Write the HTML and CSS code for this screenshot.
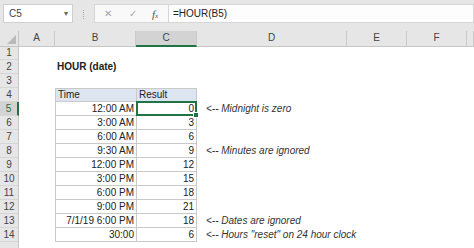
FILE: index.html
```html
<!DOCTYPE html>
<html lang="en">
<head>
    <meta charset="UTF-8">
    <title>HOUR (date)</title>
    <link rel="stylesheet" href="styles.css">
</head>
<body>
    <div class="toolbar">
        <div class="namebox">C5<span class="drop">&#9662;</span></div>
        <div class="dots"></div>
        <div class="buttons">
            <span class="btn-x">&#x2715;</span>
            <span class="btn-ok">&#x2713;</span>
            <span class="btn-fx">f<small>x</small></span>
        </div>
        <div class="formula">=HOUR(B5)</div>
    </div>

    <div class="sheet">
        <div class="row head">
            <div class="corner"><span class="tri"></span></div>
            <div class="ch">A</div>
            <div class="ch">B</div>
            <div class="ch sel">C</div>
            <div class="ch">D</div>
            <div class="ch">E</div>
            <div class="ch">F</div>
            <div class="ch"></div>
        </div>
        <div class="row"><div class="rh">1</div></div>
        <div class="row"><div class="rh">2</div><div></div><div class="title">HOUR (date)</div></div>
        <div class="row"><div class="rh">3</div></div>
        <div class="row">
            <div class="rh">4</div><div></div>
            <div class="t tb th">Time</div><div class="t tc th">Result</div>
        </div>
        <div class="row">
            <div class="rh rsel">5</div><div></div>
            <div class="t tb num">12:00 AM</div><div class="t tc num active">0</div>
            <div class="note">&lt;-- Midnight is zero</div>
        </div>
        <div class="row">
            <div class="rh">6</div><div></div>
            <div class="t tb num">3:00 AM</div><div class="t tc num">3</div>
        </div>
        <div class="row">
            <div class="rh">7</div><div></div>
            <div class="t tb num">6:00 AM</div><div class="t tc num">6</div>
        </div>
        <div class="row">
            <div class="rh">8</div><div></div>
            <div class="t tb num">9:30 AM</div><div class="t tc num">9</div>
            <div class="note">&lt;-- Minutes are ignored</div>
        </div>
        <div class="row">
            <div class="rh">9</div><div></div>
            <div class="t tb num">12:00 PM</div><div class="t tc num">12</div>
        </div>
        <div class="row">
            <div class="rh">10</div><div></div>
            <div class="t tb num">3:00 PM</div><div class="t tc num">15</div>
        </div>
        <div class="row">
            <div class="rh">11</div><div></div>
            <div class="t tb num">6:00 PM</div><div class="t tc num">18</div>
        </div>
        <div class="row">
            <div class="rh">12</div><div></div>
            <div class="t tb num">9:00 PM</div><div class="t tc num">21</div>
        </div>
        <div class="row">
            <div class="rh">13</div><div></div>
            <div class="t tb num">7/1/19 6:00 PM</div><div class="t tc num">18</div>
            <div class="note">&lt;-- Dates are ignored</div>
        </div>
        <div class="row">
            <div class="rh">14</div><div></div>
            <div class="t tb num">30:00</div><div class="t tc num">6</div>
            <div class="note">&lt;-- Hours "reset" on 24 hour clock</div>
        </div>
        <div class="row"><div class="rh"></div></div>
    </div>
</body>
</html>
```

FILE: styles.css
```css
body {
    margin: 0;
    width: 474px;
    height: 248px;
    overflow: hidden;
    background: #fff;
    font-family: "Liberation Sans", Arial, sans-serif;
    font-size: 10px;
    color: #222;
}

.toolbar {
    display: flex;
    align-items: flex-start;
    height: 31px;
    padding: 4px 0 0 3px;
    box-sizing: border-box;
    background: #e6e6e6;
}
.namebox {
    position: relative;
    width: 70px;
    height: 19px;
    box-sizing: border-box;
    border: 1px solid #cfcfcf;
    background: #fff;
    padding-left: 5px;
    line-height: 17px;
    color: #444;
}
.drop {
    position: absolute;
    right: 4px;
    top: 0;
    font-size: 8px;
    color: #666;
}
.dots {
    width: 1px;
    height: 9px;
    margin: 6px 9px 0 10px;
    border-left: 1px dotted #a8a8a8;
}
.buttons {
    display: flex;
    align-items: center;
    width: 75px;
    height: 19px;
    box-sizing: border-box;
    border: 1px solid #d6d6d6;
    background: #f9f9f9;
    color: #a5a5a5;
    font-size: 10px;
}
.btn-x { margin-left: 9px; }
.btn-ok { margin-left: 17px; }
.btn-fx {
    margin-left: 15px;
    font-family: "Liberation Serif", serif;
    font-style: italic;
    font-size: 11px;
    color: #555;
}
.btn-fx small { font-size: 7px; }
.formula {
    flex: 1;
    height: 19px;
    box-sizing: border-box;
    border: 1px solid #d6d6d6;
    border-left: none;
    background: #fdfdfd;
    padding-left: 4px;
    line-height: 17px;
}

.row {
    display: grid;
    grid-template-columns: 19px 36px 81px 61px 150px 60px 60px 1fr;
    height: 14px;
    line-height: 14px;
}
.row > div {
    box-sizing: border-box;
    white-space: nowrap;
}
.head {
    height: 15px;
    line-height: 14px;
    background: #e6e6e6;
}
.head > div {
    border-bottom: 1px solid #c6c6c6;
}
.corner {
    position: relative;
    border-right: 1px solid #c6c6c6;
}
.tri {
    position: absolute;
    right: 2px;
    bottom: 2px;
    border-left: 9px solid transparent;
    border-bottom: 9px solid #b9b9b9;
}
.ch {
    text-align: center;
    color: #444;
    border-right: 1px solid #cacaca;
}
.ch.sel {
    background: #d3d3d3;
    border-bottom: 2px solid #217346;
}

.rh {
    background: #e6e6e6;
    border-right: 1px solid #c6c6c6;
    border-bottom: 1px solid #d6d6d6;
    text-align: center;
    color: #444;
    line-height: 13px;
}
.rh.rsel {
    background: #d3d3d3;
    color: #217346;
    border-right: 2px solid #217346;
}

.title {
    font-weight: bold;
    padding-left: 2px;
}

.t {
    border-bottom: 1px solid #c9c9c9;
    line-height: 13px;
    padding: 0 2px;
}
.tb { border-left: 1px solid #c9c9c9; }
.tc {
    border-left: 1px solid #c9c9c9;
    border-right: 1px solid #c9c9c9;
}
.th {
    background: #dde6f0;
    border-top: 1px solid #c9c9c9;
    line-height: 12px;
}
.num { text-align: right; }

.active { position: relative; }
.active::after {
    content: "";
    position: absolute;
    left: -1px;
    top: -1px;
    right: -1px;
    bottom: -1px;
    border: 2px solid #217346;
}
.active::before {
    content: "";
    position: absolute;
    right: -3px;
    bottom: -3px;
    width: 4px;
    height: 4px;
    background: #217346;
    border: 1px solid #fff;
    z-index: 1;
}

.note {
    font-style: italic;
    color: #333;
    padding-left: 9px;
    overflow: visible;
}
```
